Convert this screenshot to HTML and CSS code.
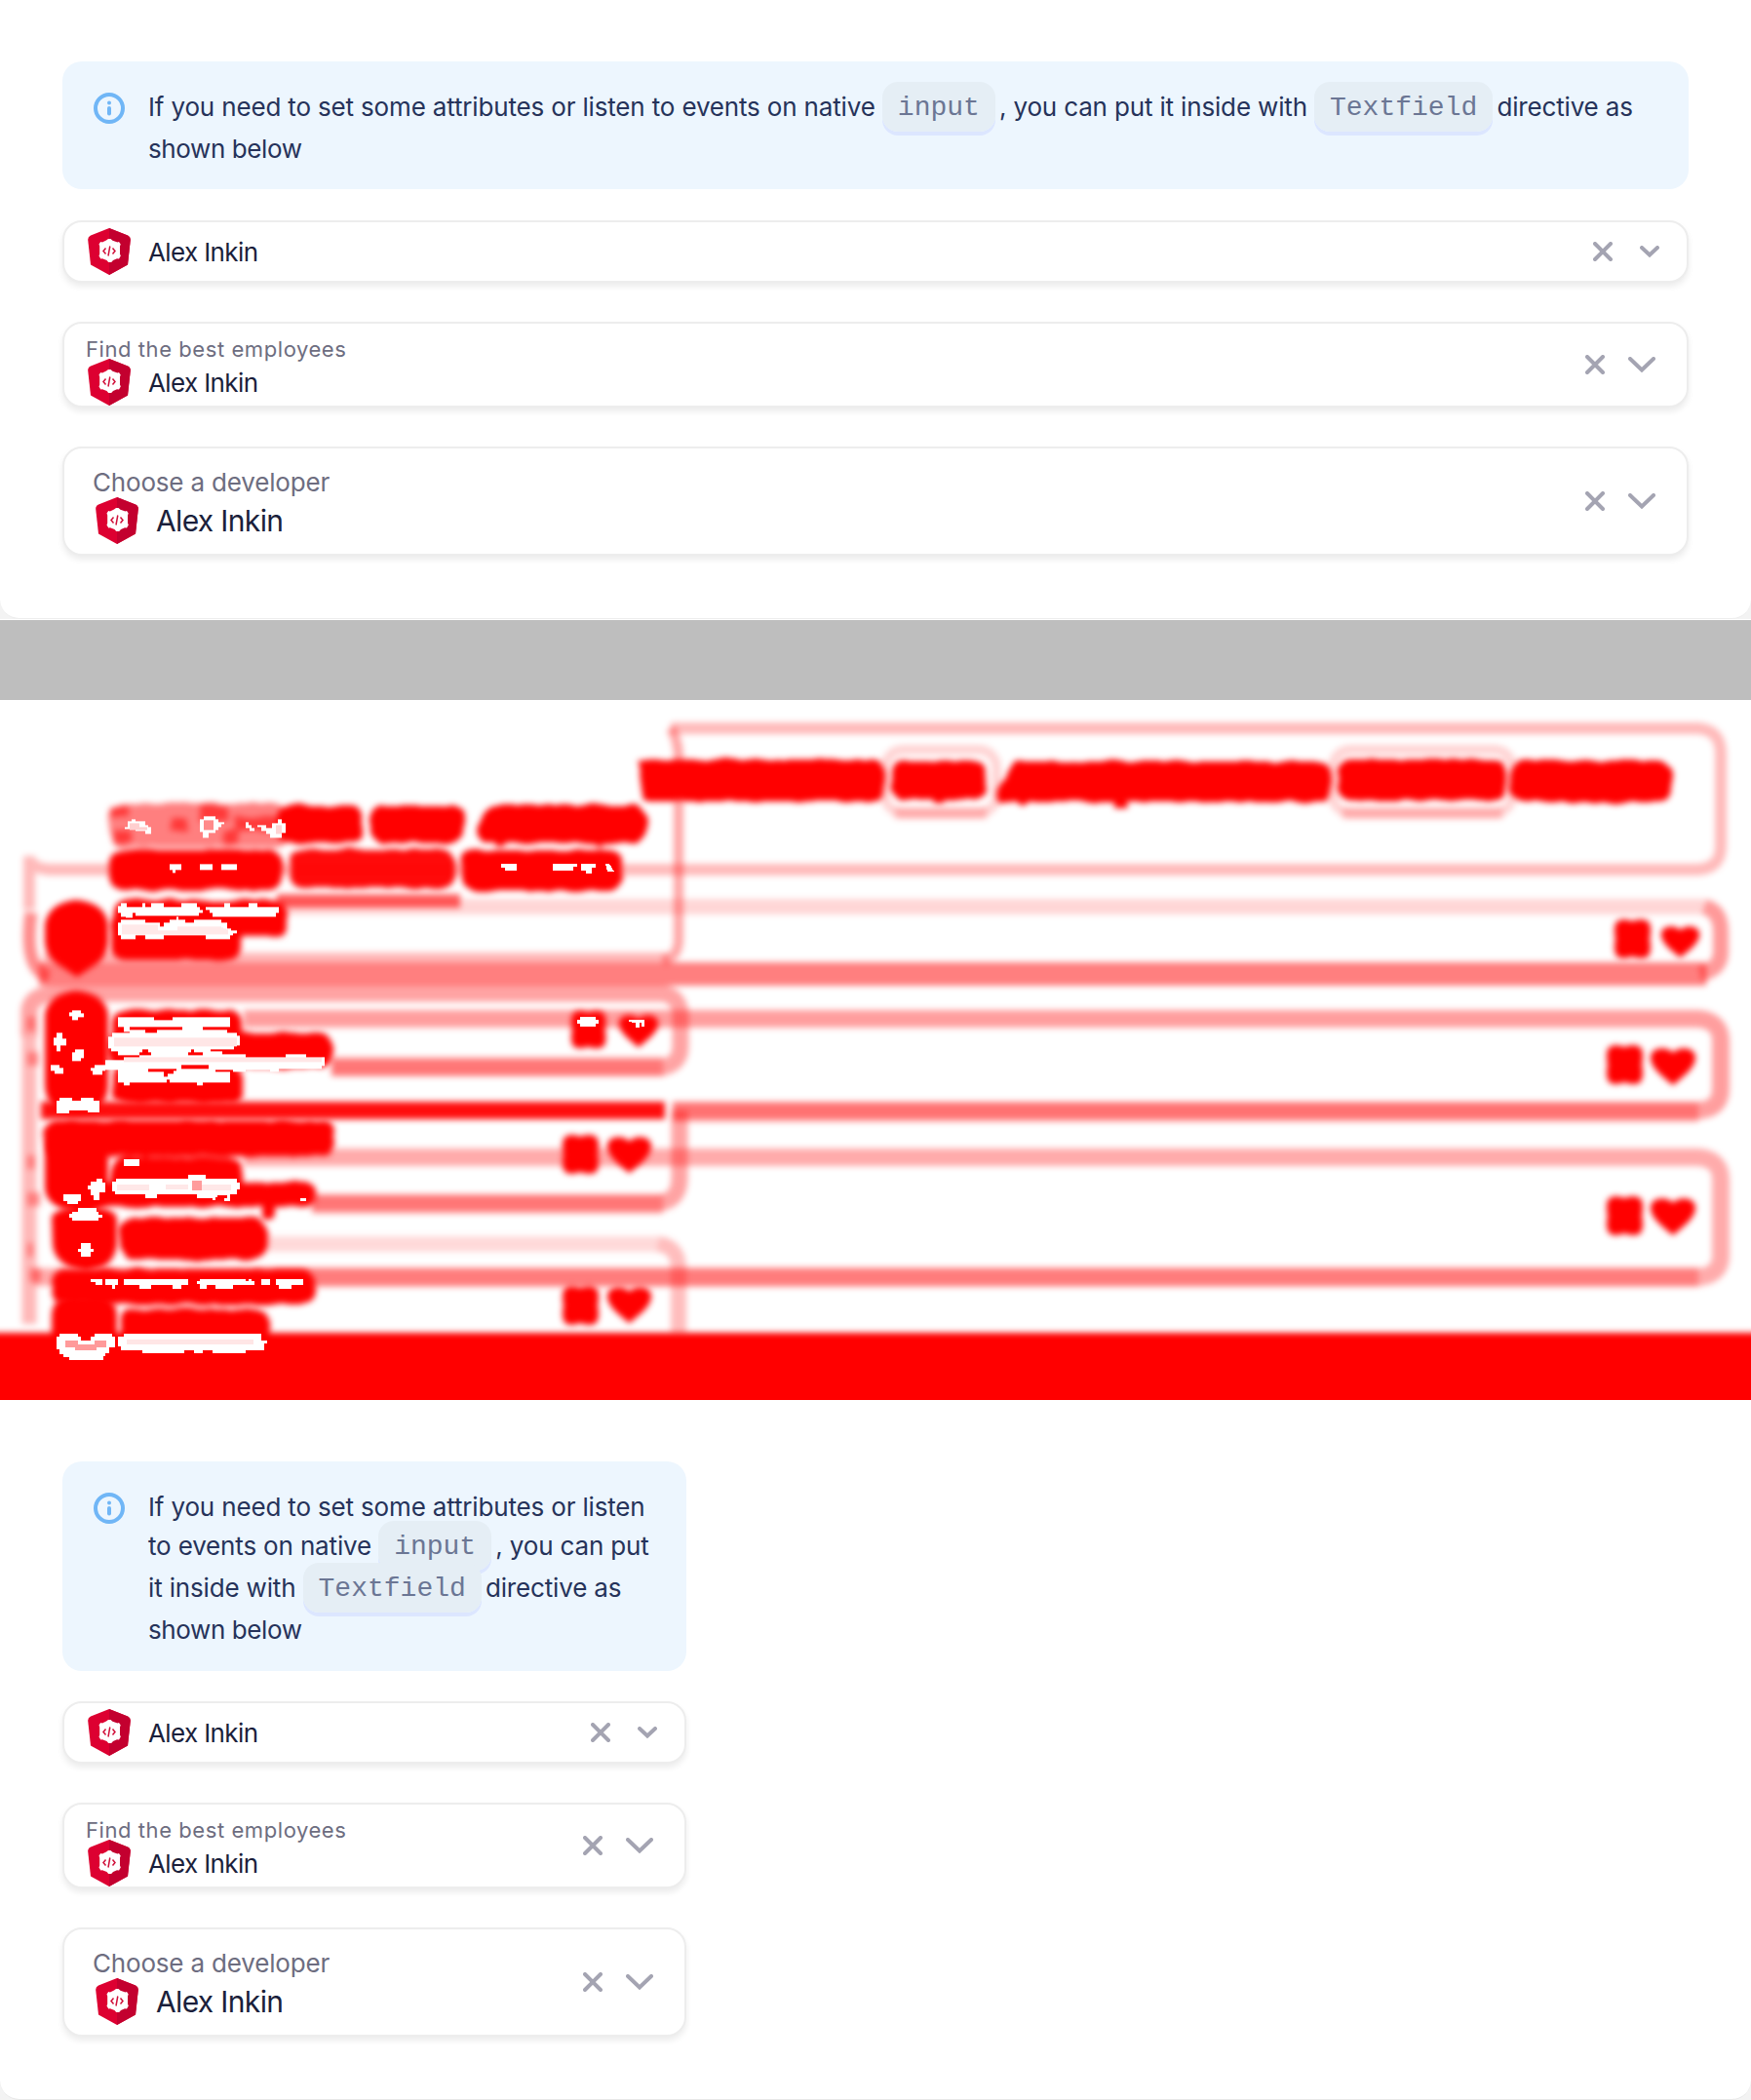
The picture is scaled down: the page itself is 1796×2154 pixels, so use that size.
FILE: index.html
```html
<!DOCTYPE html>
<html lang="en">
<head>
<meta charset="utf-8">
<title>Combo box comparison</title>
<link rel="stylesheet" href="styles.css">
</head>
<body>
<svg class="defs" aria-hidden="true">
  <symbol id="info" viewBox="0 0 32 32">
    <circle cx="16" cy="16" r="14" fill="none" stroke="#70b6f6" stroke-width="4"/>
    <circle cx="16" cy="10.6" r="2" fill="#70b6f6"/>
    <path d="M16 16v5.5" stroke="#70b6f6" stroke-width="4" stroke-linecap="round"/>
  </symbol>
  <symbol id="shield" viewBox="0 0 44 48">
    <path d="M22 0 41 7.5Q44 9 43.8 12L41 37.5 22 48 3 37.5.2 12Q0 9 3 7.500Z" fill="#dd0031"/>
    <path d="M22 0 41 7.500Q44 9 43.800 12L41 37.500 22 48Z" fill="#c3002f"/>
    <path d="M19 12.500 21 11h2.500l2 1.800 5 1.700 1.500-.5 1.700 2.500-.7 2v8l.8 2-1.800 3-2-.2-4 1.700-1.800 2h-3l-1.700-2-4.500-1.700-1.700.2-1.800-3 .7-2v-8l-.7-2 1.700-2.500 1.700.5Z" fill="#fff"/>
    <path d="M18.500 20.500 16 23.500l2.500 3M25.500 20.500l2.500 3-2.500 3M22.800 18.500l-1.800 10" fill="none" stroke="#d0103a" stroke-width="1.500"/>
  </symbol>
  <symbol id="close" viewBox="0 0 20 20"><path d="M2 2 18 18M18 2 2 18" fill="none" stroke="#a4a4b2" stroke-width="4" stroke-linecap="round"/></symbol>
  <symbol id="chev-s" viewBox="0 0 20 12"><path d="M2 2 10 9.500 18 2" fill="none" stroke="#a4a4b2" stroke-width="4" stroke-linecap="round"/></symbol>
  <symbol id="chev-l" viewBox="0 0 28 16"><path d="M2 2 14 13.500 26 2" fill="none" stroke="#a4a4b2" stroke-width="4" stroke-linecap="round"/></symbol>
</svg>

<section class="panel wide">
  <div class="sheet">
    <div class="note">
      <svg class="note-icon"><use href="#info"/></svg>
      <p><span class="line">If you need to set some attributes or listen to events on native <code>input</code> , you can put it inside with <code>Textfield</code> directive as</span><span class="line last">shown below</span></p>
    </div>
    <div class="select s">
      <svg class="logo"><use href="#shield"/></svg><span class="value">Alex Inkin</span>
      <svg class="x"><use href="#close"/></svg><svg class="chev"><use href="#chev-s"/></svg>
    </div>
    <div class="select md">
      <div class="field"><span class="label">Find the best employees</span><div class="row"><svg class="logo"><use href="#shield"/></svg><span class="value">Alex Inkin</span></div></div>
      <svg class="x"><use href="#close"/></svg><svg class="chev"><use href="#chev-l"/></svg>
    </div>
    <div class="select l">
      <div class="field"><span class="label">Choose a developer</span><div class="row"><svg class="logo"><use href="#shield"/></svg><span class="value">Alex Inkin</span></div></div>
      <svg class="x"><use href="#close"/></svg><svg class="chev"><use href="#chev-l"/></svg>
    </div>
  </div>
</section>

<svg class="diff" viewBox="0 0 1796 718">
  <defs>
    <filter id="soft" filterUnits="userSpaceOnUse" x="-20" y="-20" width="1840" height="760" color-interpolation-filters="sRGB"><feGaussianBlur stdDeviation="3.200"/></filter>
    <filter id="rough" filterUnits="userSpaceOnUse" x="-20" y="-20" width="1840" height="760" color-interpolation-filters="sRGB">
      <feTurbulence type="fractalNoise" baseFrequency=".06" numOctaves="1" seed="4"/>
      <feDisplacementMap in="SourceGraphic" scale="7" xChannelSelector="R" yChannelSelector="G"/>
      <feGaussianBlur stdDeviation="3"/>
    </filter>
    <path id="heart" d="M25 41C18 34 1 24 1 11 1 1 17-2 25 6 33-2 49 1 49 11 49 24 32 34 25 41Z"/>
    <path id="clover" d="M11 1Q16 1 20 3 24 1 30 1 39 1 39 11 39 18 38 21 39 25 39 31 39 41 30 41 24 41 20 39 16 41 11 41 2 41 2 31 2 25 3 21 2 18 2 11 2 1 11 1Z"/>
  </defs>
  <g filter="url(#soft)" fill="none" stroke="#f00">
    <path d="M688 29H1742Q1765 31 1765 55V150Q1765 172 1742 174H50Q30 172 30 160V215" stroke-width="12" stroke-opacity=".27"/>
    <path d="M688 29Q696 42 696 60V245Q696 264 680 267" stroke-width="10" stroke-opacity=".35"/>
    <path d="M290 212H1748" stroke-width="16" stroke-opacity=".16"/>
    <path d="M1748 212Q1765 216 1765 238V258Q1765 276 1744 281" stroke-width="16" stroke-opacity=".4"/>
    <path d="M32 218Q24 276 50 284" stroke-width="13" stroke-opacity=".45"/>
    <path d="M45 264H685" stroke-width="10" stroke-opacity=".28"/>
    <path d="M40 281H1750" stroke-width="24" stroke-opacity=".5"/>
    <path d="M30 345V318Q32 303 55 301H680Q698 304 698 325V355Q698 374 678 377H340" stroke-width="17" stroke-opacity=".36"/>
    <path d="M250 327H1742Q1765 329 1765 350V398Q1765 420 1742 421H690" stroke-width="18" stroke-opacity=".38"/>
    <path d="M340 376H680M320 517H680M260 592H1742M690 423H1742" stroke-width="20" stroke-opacity=".28"/>
    <path d="M30 345V640" stroke-width="15" stroke-opacity=".28"/>
    <path d="M42 421H682" stroke-width="18" stroke-opacity=".95"/>
    <path d="M697 421V490Q697 514 675 516H320" stroke-width="17" stroke-opacity=".36"/>
    <path d="M250 469H1742Q1765 471 1765 492V570Q1765 590 1742 592H35" stroke-width="18" stroke-opacity=".33"/>
    <path d="M275 558H675" stroke-width="16" stroke-opacity=".15"/>
    <path d="M675 558Q696 560 696 584V652" stroke-width="16" stroke-opacity=".26"/>
    <rect x="908" y="51" width="114" height="65" rx="18" stroke-width="10" stroke-opacity=".17"/>
    <rect x="1367" y="51" width="184" height="65" rx="18" stroke-width="10" stroke-opacity=".17"/>
    <path d="M918 116H1012M1377 116H1541" stroke-width="12" stroke-opacity=".2"/>
    <path d="M284 206H472" stroke-width="14" stroke-opacity=".62"/>
    <path d="M28 332h8M28 368h12M28 474h8M28 512h14M28 564h6M30 590h12" stroke-width="14" stroke-opacity=".35"/>
  </g>
  <g filter="url(#soft)" fill="#f00">
    <path d="M-10 649V735H1810V649Z"/>
    <path d="M78 205Q108 208 111 230V248Q110 266 94 274L79 284 64 274Q47 266 46 248V230Q50 208 78 205Z"/>
    <path d="M78 298Q108 301 111 322V395Q110 424 79 424 47 424 46 395V322Q50 301 78 298Z"/>
    <rect x="46" y="444" width="65" height="76" rx="20"/>
    <path d="M53 530Q58 520 88 520 118 520 120 532V558Q118 576 104 582L88 586 72 582Q55 574 54 558Z"/>
    <rect x="53" y="611" width="67" height="60" rx="20"/>
    <use href="#clover" transform="translate(1654 224)"/><use href="#heart" transform="translate(1703 231) scale(.82)"/>
    <use href="#clover" transform="translate(1646 353)"/><use href="#heart" transform="translate(1692 356) scale(.96)"/>
    <use href="#clover" transform="translate(1646 508)"/><use href="#heart" transform="translate(1692 510) scale(.96)"/>
    <use href="#clover" transform="translate(584 318) scale(.96)"/><use href="#heart" transform="translate(634 322) scale(.84)"/>
    <use href="#clover" transform="translate(575 445)"/><use href="#heart" transform="translate(622 447) scale(.94)"/>
    <use href="#clover" transform="translate(575 600)"/><use href="#heart" transform="translate(622 601) scale(.94)"/>
  </g>
  <g filter="url(#rough)" fill="#f00">
    <path d="M654 61H898Q908 64 908 84 908 104 898 104H660Z"/>
    <rect x="915" y="62" width="97" height="40" rx="12"/><rect x="955" y="85" width="14" height="22" rx="5"/>
    <path d="M1045 63H1355Q1366 66 1366 84 1366 104 1355 104H1157V110H1143V104H1058L1049 109 1042 104H1024Q1018 92 1032 80 1036 65 1045 63Z"/>
    <rect x="1373" y="61" width="171" height="42" rx="12"/><rect x="1549" y="62" width="166" height="43" rx="15"/>
    <rect x="112" y="106" width="185" height="45" rx="14" opacity=".5"/>
    <path d="M114 108h18v12h-18ZM116 134h18v12h-18ZM204 108h30v16h-30ZM240 120h45v14h-45ZM174 122h20v12h-20ZM230 134h14v14h-14Z" opacity=".55"/>
    <rect x="284" y="108" width="88" height="39" rx="13"/><rect x="380" y="108" width="96" height="39" rx="13"/>
    <path d="M505 108H650Q664 112 664 128 664 146 650 147H622L615 151 608 147H520L513 151 505 147H494Q482 137 494 124 497 110 505 108Z"/>
    <rect x="112" y="154" width="177" height="41" rx="14"/><rect x="297" y="153" width="170" height="40" rx="14" opacity=".96"/><rect x="473" y="154" width="165" height="42" rx="14"/>
    <rect x="117" y="205" width="178" height="38" rx="13"/><rect x="114" y="220" width="134" height="47" rx="13"/>
    <rect x="115" y="318" width="133" height="60" rx="14"/><rect x="110" y="341" width="231" height="36" rx="13"/><rect x="115" y="376" width="134" height="38" rx="13"/>
    <rect x="46" y="431" width="296" height="37" rx="13"/><rect x="114" y="469" width="134" height="40" rx="12"/>
    <rect x="60" y="494" width="263" height="26" rx="10"/><rect x="269" y="510" width="13" height="22" rx="5"/>
    <rect x="123" y="531" width="152" height="43" rx="16"/>
    <rect x="53" y="584" width="269" height="36" rx="13"/><rect x="123" y="624" width="152" height="50" rx="14"/>
  </g>
  <g fill="#fff" shape-rendering="crispEdges">
    <path d="M514 168h16v7h-12v-3h-4ZM567 168h25v3h-4v4h-21ZM596 168h15v4h-4v6h-6v-3h-5ZM621 168h4l5 8h-7Z"/>
    <path d="M595 325h16v3h3v4h-3v3h-16v-3h-3v-4h3ZM645 328h16v7h-3v-4h-2v5h-4v-5h-4v-1h-3Z"/>
  </g>
  <g transform="translate(20 82) scale(.33333)" fill="#fff" shape-rendering="crispEdges">
    <path d="M325 145h9v-18h12v-7h12v8h30v10h9v8h9v20h-20v-8h-30v-6h-31Z"/><path d="M340 132h30v12h22v10h-52Z" fill="#ffcfcf"/>
    <path d="M556 120h10v-8h37v10h10v8h17v6h-10v8h-8v10h-10v8h-20v17h-17v-20h-9Z"/><path d="M567 124h30v30h-30Z" fill="#ff8a8a"/>
    <path d="M697 130h8v8h10v10h8v9h-15v-8h-11ZM733 138h25v10h20v-14h18v-12h10v10h12v32h-10v15h-38v-12h-10v-10h-17v-12h-10Z"/><path d="M788 140h18v26h-18Z" fill="#ffd4d4"/>
    <path d="M462 258h35v20h-17v8h-9v-8h-9ZM555 258h38v20h-38ZM622 258h47v20h-47Z"/>
    <path d="M303 388h10v-8h17v10h48v-10h10v10h17v-10h38v10h55v-10h48v10h8v9h10v10h-12v10H357v-10h-9v14h-20v-3h-16v-10h-9Z"/>
    <path d="M574 390h56v-10h18v10h57v-10h27v10h66v20h-10v10H594v-10h-10v-10h-10Z"/>
    <path d="M303 440h10v-10h74v8h45v12h12v-10h18v-10h20v-8h8v8h20v8h27v-8h83v8h20v18h10v7h18v8h-10v8h-10v10h-75v-10H444v10h-57v-10h-30v10h-45v-10h-9Z"/>
    <path d="M315 446h110v16h60v-12h130l28 12v12H315Z" fill="#ffe9e9"/>
    <path d="M162 708h28v10h8v12h-17v8h-18v-12h-9v-10h8ZM115 778h18v18h10v20h-18v18h-10v-18h-10v-22h10ZM172 828h26v28h-10v10h-26v-28h10ZM96 878h28v8h10v18h-26v-10h-12ZM230 878h34v18h-10v10h-28v-12h-8v-8h12Z"/>
    <path d="M303 730h112v8h55v-8h178v30h-83v10h-65v-10H340v15h-20v-15h-17Z"/>
    <path d="M274 790h10v-12h54v-8h48v8h36v-8h190v-2h28v10h30v10h9v28h-20v12h-72v8h36v8h73v8h122v-8h63v8h58v28h-10v9H798v10h-28v-8H695v8h-38v-8H603v8h45v32h-83v8h-18v-8h-85v-10h-10v10H340v8h-20v-8h-17v-38h-38v-30h55v-8h50v-9H303v-10h-20v-10h-9Z"/>
    <path d="M292 792h376v28H292ZM320 852h610v16H320Z" fill="#ffe6e6"/>
    <path d="M370 838h8v-10h17v10h9v8h-34ZM520 838h8v-10h10v10h27v8h-45ZM395 888h88v8h-10v8h-17v10h-12v-16h-49ZM497 878h86v10h-86Z" fill="#f00"/>
  </g>
  <g transform="translate(20 402) scale(.33333)" fill="#fff" shape-rendering="crispEdges">
    <path d="M114 26h10v-8h38v8h26v-8h40v8h18v38h-36v-8h-56v10h-40ZM321 207h48v20h-48Z"/>
    <path d="M286 276h10v-8h224v-12h53v12h97v10h8v22h-8v15h-22v20h-18v-8h8v-10h-28v8h-8v9h-9v-8h-48v-10H422v10h-35v-10h-93v-10h-8Z"/>
    <path d="M300 284h100v20h-100ZM450 284h70v16h-70ZM560 286h90v18h-90Z" fill="#ffe8e8"/><path d="M530 274h32v28h-32Z" fill="#ff9c9c"/>
    <path d="M210 288h10v-12h18v-8h18v10h8v32h-18v24h-18v-16h-8v-18h-10ZM136 315h53v20h-9v10h-34v-10h-10ZM163 368h17v-10h56v10h8v10h10v8h-10v9h-82v-9h-9v-10h10ZM188 465h30v17h10v10h-10v14h-28v-14h-10v-10h8ZM863 327h20v8h-20Z"/>
    <path d="M220 575h34v18h-20v-8h-14ZM264 575h38v20h-8v10h-8v-10h-22ZM321 575h198v20h-20v10h-28v-10h-66v10h-36v-10h-48ZM555 575h142v8h8v-8h8v8h10v10h-66v12h-54v-10h-28v10h-20v-15h-8v-7h8ZM744 575h27v18h-27ZM789 575h84v18h-36v12h-38v-12h-10Z"/>
    <path d="M114 754h9v-10h57v10h10v10h30v-10h10v-10h54v10h9v32h-18v18h-10v10h-8v10H152v-8h-18v-10h-10v-14h-10Z"/>
    <path d="M142 764h38v12h50v-12h38v22h-30v10h-68v-10h-28Z" fill="#ff9a9a"/>
    <path d="M303 754h18v-10h424v20h17v10h-9v22h-57v8H594v-8h-30v8h-28v-8h-28v8H378v-8h-66v-12h-9Z"/>
    <path d="M330 762h390v16H330Z" fill="#ffe6e6"/>
  </g>
</svg>

<section class="panel narrow">
  <div class="sheet">
    <div class="note">
      <svg class="note-icon"><use href="#info"/></svg>
      <p><span class="line first">If you need to set some attributes or listen</span><span class="line">to events on native <code>input</code> , you can put</span><span class="line">it inside with <code>Textfield</code> directive as</span><span class="line last">shown below</span></p>
    </div>
    <div class="select s">
      <svg class="logo"><use href="#shield"/></svg><span class="value">Alex Inkin</span>
      <svg class="x"><use href="#close"/></svg><svg class="chev"><use href="#chev-s"/></svg>
    </div>
    <div class="select md">
      <div class="field"><span class="label">Find the best employees</span><div class="row"><svg class="logo"><use href="#shield"/></svg><span class="value">Alex Inkin</span></div></div>
      <svg class="x"><use href="#close"/></svg><svg class="chev"><use href="#chev-l"/></svg>
    </div>
    <div class="select l">
      <div class="field"><span class="label">Choose a developer</span><div class="row"><svg class="logo"><use href="#shield"/></svg><span class="value">Alex Inkin</span></div></div>
      <svg class="x"><use href="#close"/></svg><svg class="chev"><use href="#chev-l"/></svg>
    </div>
  </div>
</section>
</body>
</html>
```
FILE: styles.css
```css
* { box-sizing: border-box; }
body { margin: 0; width: 1796px; background: #fff; font-family: Inter, sans-serif; font-weight: 400; font-size: 26px; color: #1b1f3b; }
svg { display: block; flex: none; }
.defs { position: absolute; width: 0; height: 0; }

.panel { height: 718px; overflow: hidden; }
.sheet { padding: 63px 64px 0; border-radius: 0 0 20px 20px; background: #fff; }
.wide { background: linear-gradient(#f3f3f3 635px, #fff 635px 636px, #bebebe 636px); }
.wide .sheet { height: 635px; border-bottom: 1px solid #ededed; }
.narrow { background: #f3f3f3; }
.narrow .sheet { height: 718px; border-bottom: 1px solid #e8e8e8; }
.narrow .note, .narrow .select { width: 640px; }

.note { display: flex; gap: 24px; padding: 32px; height: 131px; margin-bottom: 32px; border-radius: 20px; background: #edf6fe; color: #26335a; }
.narrow .note { height: 215px; margin-bottom: 31px; }
.note-icon { width: 32px; height: 32px; }
.note p { margin: -7px 0 0; letter-spacing: -0.16px; }
.line { display: block; height: 43px; line-height: 43px; white-space: nowrap; }
.line.first { height: 40px; }
.line.last { letter-spacing: -0.4px; }
code { position: relative; top: -1px; margin-right: -3px; padding: 11px 16px 9px; border-radius: 16px; background: #e5eef5; box-shadow: 0 4px #dce6ff; color: #6b7694; font: 400 28px/28px "Liberation Mono", monospace; letter-spacing: 0; }

.select { display: flex; align-items: center; margin-bottom: 40px; border: 2px solid #ededed; border-radius: 20px; background: #fff; box-shadow: 0 4px 6px rgba(0, 0, 0, .08); }
.select.s { height: 64px; padding: 0 28px 0 24px; }
.select.md { height: 88px; padding: 0 32px 0 22px; }
.select.l { height: 112px; padding: 0 32px 0 30px; }
.logo { width: 44px; height: 48px; margin-right: 18px; margin-left: 2px; }
.s .logo { margin-left: 0; }
.value { padding-top: 1px; letter-spacing: -0.62px; line-height: 32px; }
.label { display: block; color: #6d6d80; }
.row { display: flex; align-items: center; }
.field { align-self: flex-start; }
.md .label { margin-top: 10px; height: 26px; line-height: 32px; font-size: 22px; letter-spacing: .57px; }
.l .label { margin-top: 18px; margin-left: -1px; height: 32px; line-height: 34px; letter-spacing: -0.18px; }
.l .value { padding-top: 0; font-size: 30px; letter-spacing: -.65px; }
.x { width: 20px; height: 20px; margin-left: auto; }
.chev { width: 28px; height: 16px; margin-left: 24px; }
.s .chev { width: 20px; height: 12px; margin-left: 28px; }

.diff { width: 1796px; height: 718px; background: #fff; }
```
